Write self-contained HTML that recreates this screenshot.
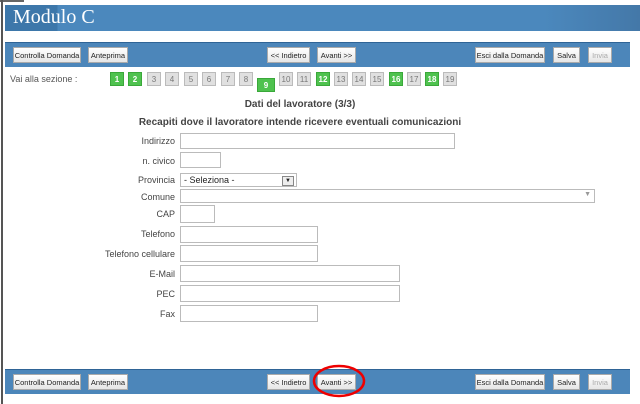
<!DOCTYPE html><html><head><style>
body{margin:0;width:640px;height:404px;background:#fff;position:relative;overflow:hidden;font-family:"Liberation Sans",sans-serif;}
.a{position:absolute;}
.bar{position:absolute;left:5px;width:625px;height:24px;background:#4c86ba;border-top:1px solid #2f6496;}
.btn{position:absolute;top:4px;height:16px;background:linear-gradient(#fff,#e6e6e6);border:1px solid #aaa;font-size:7.5px;line-height:16px;text-align:center;color:#222;box-sizing:border-box;}
.sec{position:absolute;top:72px;width:14px;height:14px;font-size:8px;line-height:14px;text-align:center;box-sizing:border-box;}
.g{background:#4fc24f;color:#fff;font-weight:bold;border:1px solid #3aa83a}
.n{background:#e0e0e0;color:#777;border:1px solid #bbb}
.lab{position:absolute;right:465px;font-size:9px;color:#444;text-align:right;}
.in{position:absolute;left:180px;border:1px solid #bbb;box-sizing:border-box;background:#fff;}
</style></head><body>
<div class="a" style="left:0;top:0;width:24px;height:2px;background:#666"></div>
<div class="a" style="left:1px;top:0;width:2px;height:404px;background:#555"></div>
<div class="a" style="left:5px;top:5px;width:635px;height:26px;background:linear-gradient(90deg,#3d77aa 0,#3d77aa 52px,#4b88bd 53px,#4b88bd 85%,#4478a8 100%)"></div>
<div class="a" style="left:13px;top:6px;font-family:'Liberation Serif',serif;font-size:20px;color:#fff">Modulo C</div>

<div class="bar" style="top:42px">
<div class="btn" style="left:8px;width:68px">Controlla Domanda</div>
<div class="btn" style="left:83px;width:40px">Anteprima</div>
<div class="btn" style="left:262px;width:43px">&lt;&lt; Indietro</div>
<div class="btn" style="left:312px;width:39px">Avanti &gt;&gt;</div>
<div class="btn" style="left:470px;width:70px">Esci dalla Domanda</div>
<div class="btn" style="left:548px;width:27px">Salva</div>
<div class="btn" style="left:583px;width:24px;color:#aaa">Invia</div>
</div>

<div class="a" style="left:10px;top:74px;font-size:9px;color:#555">Vai alla sezione :</div>
<div class="sec g" style="left:110px">1</div>
<div class="sec g" style="left:128px">2</div>
<div class="sec n" style="left:147px">3</div>
<div class="sec n" style="left:165px">4</div>
<div class="sec n" style="left:184px">5</div>
<div class="sec n" style="left:202px">6</div>
<div class="sec n" style="left:221px">7</div>
<div class="sec n" style="left:239px">8</div>
<div class="sec g" style="left:257px;top:78px;width:18px">9</div>
<div class="sec n" style="left:279px">10</div>
<div class="sec n" style="left:297px">11</div>
<div class="sec g" style="left:316px">12</div>
<div class="sec n" style="left:334px">13</div>
<div class="sec n" style="left:352px">14</div>
<div class="sec n" style="left:370px">15</div>
<div class="sec g" style="left:389px">16</div>
<div class="sec n" style="left:407px">17</div>
<div class="sec g" style="left:425px">18</div>
<div class="sec n" style="left:443px">19</div>

<div class="a" style="left:0;width:600px;top:99px;text-align:center;font-size:10px;font-weight:bold;color:#444">Dati del lavoratore (3/3)</div>
<div class="a" style="left:0;width:600px;top:117px;text-align:center;font-size:10px;font-weight:bold;color:#444">Recapiti dove il lavoratore intende ricevere eventuali comunicazioni</div>

<div class="lab" style="top:136px">Indirizzo</div><div class="in" style="top:133px;width:275px;height:16px"></div>
<div class="lab" style="top:156px">n. civico</div><div class="in" style="top:152px;width:41px;height:16px"></div>
<div class="lab" style="top:175px">Provincia</div><div class="in" style="top:173px;width:117px;height:14px;font-size:9px;line-height:12px;padding-left:3px;color:#222">- Seleziona -<div class="a" style="right:2px;top:2px;width:10px;height:8px;border:1px solid #888;background:#eee;font-size:6px;line-height:8px;text-align:center">▼</div></div>
<div class="lab" style="top:192px">Comune</div><div class="in" style="top:189px;width:415px;height:14px"><div class="a" style="right:3px;top:1px;font-size:7px;color:#999">▼</div></div>
<div class="lab" style="top:209px">CAP</div><div class="in" style="top:205px;width:35px;height:18px"></div>
<div class="lab" style="top:229px">Telefono</div><div class="in" style="top:226px;width:138px;height:17px"></div>
<div class="lab" style="top:249px">Telefono cellulare</div><div class="in" style="top:245px;width:138px;height:17px"></div>
<div class="lab" style="top:269px">E-Mail</div><div class="in" style="top:265px;width:220px;height:17px"></div>
<div class="lab" style="top:289px">PEC</div><div class="in" style="top:285px;width:220px;height:17px"></div>
<div class="lab" style="top:309px">Fax</div><div class="in" style="top:305px;width:138px;height:17px"></div>

<div class="bar" style="top:369px">
<div class="btn" style="left:8px;width:68px">Controlla Domanda</div>
<div class="btn" style="left:83px;width:40px">Anteprima</div>
<div class="btn" style="left:262px;width:43px">&lt;&lt; Indietro</div>
<div class="btn" style="left:312px;width:39px">Avanti &gt;&gt;</div>
<div class="btn" style="left:470px;width:70px">Esci dalla Domanda</div>
<div class="btn" style="left:548px;width:27px">Salva</div>
<div class="btn" style="left:583px;width:24px;color:#aaa">Invia</div>
</div>
<svg class="a" style="left:0;top:0" width="640" height="404"><ellipse cx="339" cy="381" rx="25" ry="15" fill="none" stroke="#e00" stroke-width="2.5"/></svg>
</body></html>
